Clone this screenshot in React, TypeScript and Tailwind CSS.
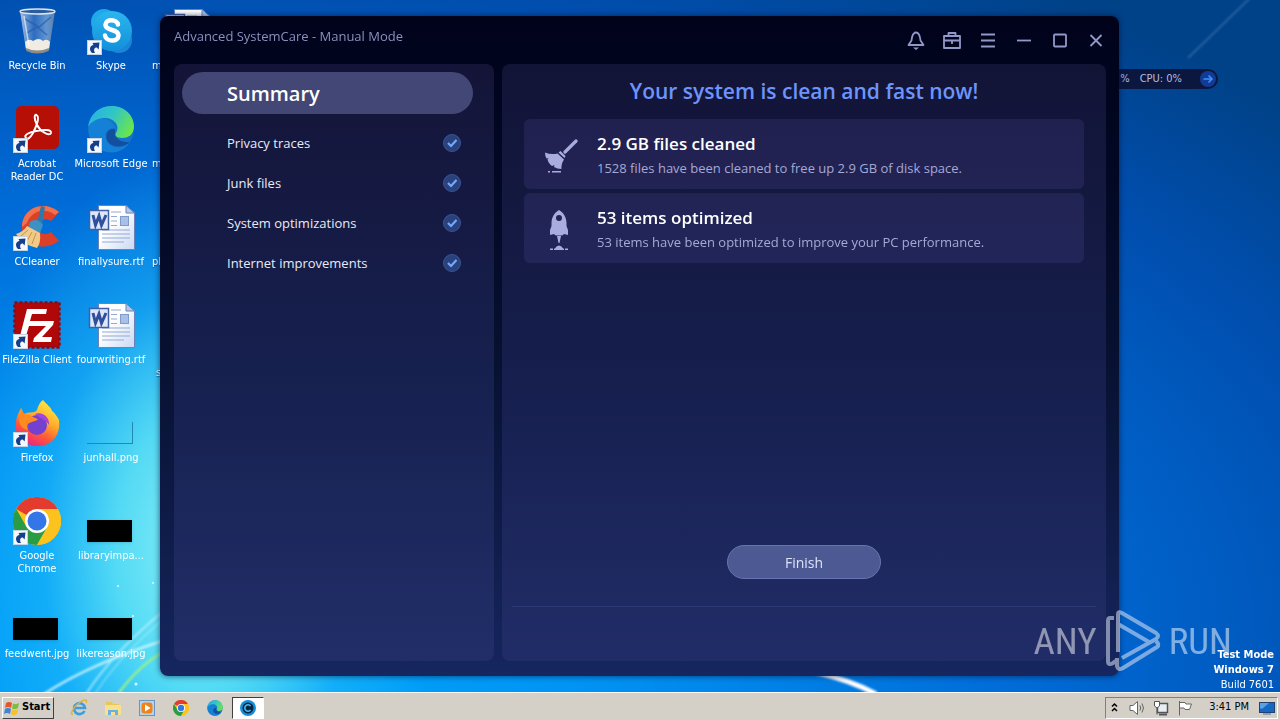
import type { ReactNode } from 'react'

interface DesktopItem {
  label: string
  icon: ReactNode
  shortcut?: boolean
}

const checks = ['Privacy traces', 'Junk files', 'System optimizations', 'Internet improvements']

function Shortcut() {
  return (
    <svg viewBox="0 0 15 15" className="absolute bottom-0 left-0 size-[15px]">
      <rect x="0.5" y="0.5" width="14" height="14" fill="#f4f8fc" stroke="#c3d3e2" />
      <path d="M5 13C1.500 9.500 3 5.500 6.500 5L5.500 3L12.500 2.500L11.600 9.500L9.800 7.500C7 7.500 6.400 10 8 13Z" fill="#153f8a" />
    </svg>
  )
}

function RecycleBin() {
  return (
    <svg viewBox="0 0 48 48" className="size-12">
      <defs>
        <linearGradient id="bin" x1="0" x2="1">
          <stop offset="0" stopColor="#b9cfe8" stopOpacity="0.9" />
          <stop offset="0.4" stopColor="#3f78c4" stopOpacity="0.7" />
          <stop offset="0.75" stopColor="#7aa5d8" stopOpacity="0.8" />
          <stop offset="1" stopColor="#5a7ea8" />
        </linearGradient>
      </defs>
      <path d="M7 4L13 43Q24 49 36 43L42 4Z" fill="url(#bin)" />
      <path d="M12 35Q16 31 20 34Q26 30 30 34Q34 31 37 35L36 42Q24 47 13 42Z" fill="#f0ece4" />
      <path d="M13 41Q24 46 36 41L35.6 44Q24 49 13.4 44Z" fill="#8d8a88" />
      <path d="M12 12L26 20L38 10M14 26L24 20L34 28" stroke="#2a5ba6" strokeWidth="1.5" fill="none" opacity="0.7" />
      <ellipse cx="24.500" cy="4.500" rx="17.500" ry="2.500" fill="#2d5c9c" stroke="#dde6ee" strokeWidth="1.4" />
      <path d="M11 9L16 39" stroke="#fff" strokeWidth="1.5" opacity="0.6" />
    </svg>
  )
}

function Skype() {
  return (
    <svg viewBox="0 0 48 48" className="size-12">
      <defs>
        <linearGradient id="skype" x1="0" y1="0" x2="0" y2="1">
          <stop offset="0" stopColor="#2bb6ee" />
          <stop offset="1" stopColor="#1290da" />
        </linearGradient>
      </defs>
      <circle cx="17" cy="15" r="13" fill="#1ea9e8" />
      <circle cx="32" cy="33" r="13" fill="#1b86d8" />
      <circle cx="25" cy="24" r="20" fill="url(#skype)" />
      <path
        d="M31 17.500C30 12 19 11.500 18.500 17.500C18.500 24.500 31.500 21.500 31.500 28.500C31.500 35.500 19 35 18 28.500"
        fill="none"
        stroke="#fff"
        strokeWidth="4.500"
        strokeLinecap="round"
      />
    </svg>
  )
}

function Acrobat() {
  return (
    <svg viewBox="0 0 48 48" className="size-12">
      <rect x="3" y="1" width="43" height="43" rx="5" fill="#b50f06" />
      <path
        d="M13 33C10 30 17 27 23 26C30 24.500 39 24 38 28C36.500 32 27 26 24 20C21 14 21 9 23.500 10C27 12 23 22 20 28C17 33 14.500 35 13 33Z"
        fill="none"
        stroke="#fff"
        strokeWidth="2"
      />
    </svg>
  )
}

function Edge({ id, size }: { id: string; size: string }) {
  return (
    <svg viewBox="0 0 48 48" className={size}>
      <defs>
        <linearGradient id={id} x1="0" y1="0.200" x2="1" y2="0.600">
          <stop offset="0" stopColor="#27b1e4" />
          <stop offset="0.500" stopColor="#32c6c4" />
          <stop offset="1" stopColor="#6be64a" />
        </linearGradient>
      </defs>
      <circle cx="24" cy="24" r="23" fill="#1673cc" />
      <path d="M2 20C7 10 24 11 28 23C18 22 16 32 22 39C28 45 38 43 43 37C36 48 24 49 16 46C5 42 0 31 2 20Z" fill="#1581d6" />
      <path d="M1 22C3 8 13 1 25 1C38 1 47 11 47 21C47 30 41 33 35 33C29 33 27 30 29 28C34 20 26 12 16 13C8 14 3 18 1 22Z" fill={`url(#${id})`} />
      <path d="M28 24C20 23 17 30 21 37C27 44 38 42 43 37C37 38 28 35 28 28Z" fill="#124f9f" />
    </svg>
  )
}

function CCleaner() {
  return (
    <svg viewBox="0 0 48 48" className="size-12">
      <path d="M46 9C30 -4 9 6 9 24C9 42 30 50 46 38L38 29C32 33 25 31 25 24C25 17 32 14 38 18Z" fill="#dd4029" />
      <path d="M46 9C30 -4 9 6 9 24L14 20C18 8 32 4 42 12Z" fill="#f2714c" />
      <path d="M28 3L24 20L29 22L32 4Z" fill="#2d78ac" />
      <path d="M17 19Q24 14 30 22L27 30L15 25Z" fill="#3e91c5" />
      <path d="M14 23L27 30Q28 40 24 45Q10 42 3 31Q10 29 14 23Z" fill="#f0ca86" />
      <path d="M15 27L8 33M19 29L14 38M23 30L19 41" stroke="#c99447" />
    </svg>
  )
}

function WordDoc() {
  return (
    <svg viewBox="0 0 48 48" className="size-12">
      <defs>
        <linearGradient id="doc" x1="0" y1="0" x2="1" y2="1">
          <stop offset="0.400" stopColor="#fff" />
          <stop offset="1" stopColor="#c9d8f4" />
        </linearGradient>
      </defs>
      <path d="M11.500 2.500H39L47.500 10V46.500H11.500Z" fill="url(#doc)" stroke="#6b82b8" />
      <path d="M39 2.500V10H47.500Z" fill="#b4c8e8" stroke="#6b82b8" />
      <path d="M24 9H34M24 13.500H30M24 18H30M24 22.500H30M15 27H43M15 31H43M15 35H43M15 39H37" stroke="#93a9d3" />
      <rect x="33.500" y="13.500" width="8" height="9" fill="#a8c0e8" stroke="#7f9acb" />
      <rect x="2.500" y="7.500" width="19" height="19" fill="#dde7f8" stroke="#3f5fa8" strokeWidth="1.500" />
      <path d="M6 12L8.500 22L12 13L14.500 22L19 12" fill="none" stroke="#31509c" strokeWidth="3" />
    </svg>
  )
}

function FileZilla() {
  return (
    <svg viewBox="0 0 48 48" className="size-12">
      <rect x="1.500" y="1.500" width="45" height="45" fill="#b00808" stroke="#8e0a10" strokeWidth="2.500" strokeDasharray="3 2" />
      <path d="M14 8H34L33 13H19L17 20H27L26 25H16L13 35H7Z" fill="#fff" />
      <path d="M25 20H41L40 24L29 36H39L38 41H20L21 37L33 25H24Z" fill="#fff" />
    </svg>
  )
}

function Firefox() {
  return (
    <svg viewBox="0 0 48 48" className="size-12">
      <defs>
        <linearGradient id="fox" x1="0.800" y1="0" x2="0.300" y2="1">
          <stop offset="0" stopColor="#fff04a" />
          <stop offset="0.400" stopColor="#ffb02a" />
          <stop offset="0.700" stopColor="#ff5a36" />
          <stop offset="1" stopColor="#e9208a" />
        </linearGradient>
      </defs>
      <path d="M30 1C34 6 38 8 39 12C41 13 44 17 46 21C48 37 38 47 25 47C11 47 1 37 3 24C3 18 6 13 8 9L11 15C15 12 21 15 24 11C25 7 27 3 30 1Z" fill="url(#fox)" />
      <circle cx="24" cy="26" r="10" fill="#7340cf" />
      <path d="M22 15C29 12 37 18 36 26C33 21 28 20 22 15Z" fill="#a544dc" />
      <path d="M8 9L11 16C16 14 19 18 25 20C23 23 18 22 15 25C14 26 14 29 15 31C10 30 7 27 6 22Z" fill="#ff8a20" />
    </svg>
  )
}

function Chrome({ size }: { size: string }) {
  return (
    <svg viewBox="0 0 48 48" className={size}>
      <circle cx="24" cy="24" r="24" fill="#fcc31e" />
      <path d="M24 24L3.200 12A24 24 0 0 1 44.800 12Z" fill="#e33b2e" />
      <path d="M3.200 12A24 24 0 0 0 24 48L34.400 30L13.600 30Z" fill="#2a9c46" />
      <path d="M24 12H44.800A24 24 0 0 1 24 48L34.400 30Z" fill="#fcc31e" />
      <circle cx="24" cy="24" r="12" fill="#fff" />
      <circle cx="24" cy="24" r="9.500" fill="#3476e8" />
    </svg>
  )
}

const blackThumb = <div className="mt-[23px] h-[22px] w-[45px] bg-black shadow-sm" />

const columns: DesktopItem[][] = [
  [
    { label: 'Recycle Bin', icon: <RecycleBin /> },
    { label: 'Acrobat Reader DC', icon: <Acrobat />, shortcut: true },
    { label: 'CCleaner', icon: <CCleaner />, shortcut: true },
    { label: 'FileZilla Client', icon: <FileZilla />, shortcut: true },
    { label: 'Firefox', icon: <Firefox />, shortcut: true },
    { label: 'Google Chrome', icon: <Chrome size="size-12" />, shortcut: true },
    { label: 'feedwent.jpg', icon: blackThumb },
  ],
  [
    { label: 'Skype', icon: <Skype />, shortcut: true },
    { label: 'Microsoft Edge', icon: <Edge id="edgeLarge" size="size-12" />, shortcut: true },
    { label: 'finallysure.rtf', icon: <WordDoc /> },
    { label: 'fourwriting.rtf', icon: <WordDoc /> },
    { label: 'junhall.png', icon: <div className="mt-[23px] h-[22px] w-[46px] border-r border-b border-[#2389b0]" /> },
    { label: 'libraryimpa...', icon: blackThumb },
    { label: 'likereason.jpg', icon: blackThumb },
  ],
]

// Labels of the column that is mostly covered by the window
const coveredLabels = ['m', 'm', 'pl', 's']

function Wallpaper() {
  return (
    <svg viewBox="0 0 1280 692" preserveAspectRatio="none" className="absolute inset-0 size-full">
      <defs>
        <filter id="soft">
          <feGaussianBlur stdDeviation="1" />
        </filter>
      </defs>
      <g fill="none" filter="url(#soft)">
        <path d="M44 694Q90 664 165 640" stroke="#d8f8ff" strokeWidth="2.500" opacity="0.800" />
        <path d="M86 694Q115 650 165 610" stroke="#c8f4ff" strokeWidth="2" opacity="0.700" />
        <path d="M95 694Q120 655 165 618" stroke="#c8f4ff" strokeWidth="1.500" opacity="0.500" />
        <path d="M118 694Q140 664 165 651" stroke="#9cf08a" strokeWidth="2.500" />
        <path d="M815 672Q850 680 876 694" stroke="#fff" strokeWidth="5" />
        <path d="M1188 58L1250 -2" stroke="#5c93c8" strokeWidth="2" opacity="0.400" />
      </g>
      <g fill="#e4fbff">
        <circle cx="118" cy="586" r="1" />
        <circle cx="153" cy="583" r="1" />
        <circle cx="136" cy="684" r="1.500" />
        <circle cx="133" cy="616" r="1" />
      </g>
    </svg>
  )
}

function DesktopIcon({ item }: { item: DesktopItem }) {
  return (
    <button className="flex h-[98px] flex-col items-center pt-[7px]">
      <span className="relative mb-1 flex size-12 shrink-0 items-start">
        {item.icon}
        {item.shortcut && <Shortcut />}
      </span>
      <span className={item.label.includes('Reader') || item.label.includes('Google') ? 'w-[60px]' : 'whitespace-nowrap'}>
        {item.label}
      </span>
    </button>
  )
}

function Broom() {
  return (
    <svg viewBox="0 0 34 34" className="size-[34px]" fill="#a9acdf">
      <path d="M32 2L21 13" stroke="#a9acdf" strokeWidth="3.200" strokeLinecap="round" />
      <path d="M16.500 12L21.500 17L20.500 19L14.500 13.500Z" />
      <path d="M13.500 14.500L20 20.500Q17 25 17.500 30Q13 30 10 28L10.500 26L8 27Q4 24 3.500 20L5 19L2.500 19.500Q1 17 1 13.500Q7 16 13.500 14.500Z" />
      <path d="M8 32H17V33.500H8ZM4 32H6V33.500H4Z" />
    </svg>
  )
}

function Rocket() {
  return (
    <svg viewBox="0 0 20 40" className="mr-1 h-10 w-5" fill="#a9acdf">
      <path fillRule="evenodd" d="M10 0C15 3 17.500 8 17.500 13V16L19 20V25L15 24Q14 25.500 12 25.500H8Q6 25.500 5 24L1 25V20L2.500 16V13C2.500 8 5 3 10 0ZM10 5A3 3 0 1 0 10 11A3 3 0 1 0 10 5Z" />
      <path d="M8 26H12L10.500 33H9.500ZM6 38.500Q7 36 10 35.500Q13 36 14 38.500ZM1 38.500H4V40H1ZM16 38.500H19V40H16ZM5 38.500H15V40H5Z" />
    </svg>
  )
}

const windowButtons: { name: string; drawing: ReactNode }[] = [
  {
    name: 'Notifications',
    drawing: (
      <>
        <path d="M1.500 14L4.500 9.500C5 4.500 6 1.500 9 1.500C12 1.500 13 4.500 13.500 9.500L16.500 14Z" />
        <path d="M6 16.500H12L9 19Z" fill="#9299c8" stroke="none" />
      </>
    ),
  },
  {
    name: 'Toolbox',
    drawing: <path d="M1 5H17V17H1ZM5.500 5V2H12.500V5M1 9.500H17M9 9V13" />,
  },
  { name: 'Menu', drawing: <path d="M2 3.500H16M2 9.500H16M2 15.500H16" /> },
  { name: 'Minimize', drawing: <path d="M2 9.500H16" /> },
  { name: 'Maximize', drawing: <rect x="3" y="3.500" width="12" height="12" rx="1" /> },
  { name: 'Close', drawing: <path d="M3.500 4L14.500 15M14.500 4L3.500 15" /> },
]

function ResultCard({ icon, title, text }: { icon: ReactNode; title: string; text: string }) {
  return (
    <li className="flex h-[70px] items-center rounded-md bg-[#7468c8]/15 pt-[3px]">
      <div className="flex w-[73px] justify-center">{icon}</div>
      <div>
        <h2 className="text-[17px] leading-6 font-semibold text-white">{title}</h2>
        <p className="text-[13px] leading-6 text-[#a5a9d6]">{text}</p>
      </div>
    </li>
  )
}

function SystemCareWindow() {
  return (
    <main className="absolute top-4 right-[161px] bottom-4 left-[160px] flex flex-col rounded-lg bg-linear-to-b from-[#00031a] via-[#07102f] to-[#16265f] pr-[13px] pb-[15px] pl-[14px] font-['Open_Sans','Noto_Sans',sans-serif] shadow-[0_0_6px_rgba(0,20,60,0.7)]">
      <header className="-mr-2 flex h-12 shrink-0 items-center justify-between">
        <span className="pb-1.5 text-[13px] text-[#8990bd]">Advanced SystemCare - Manual Mode</span>
        <div className="flex">
          {windowButtons.map((b) => (
            <button key={b.name} aria-label={b.name} className="flex h-9 w-9 items-center justify-center">
              <svg viewBox="0 0 18 19" width="18" height="19" fill="none" stroke="#9299c8" strokeWidth="1.800" strokeLinejoin="round">
                {b.drawing}
              </svg>
            </button>
          ))}
        </div>
      </header>

      <div className="flex min-h-0 flex-1 gap-2">
        <nav className="w-[320px] shrink-0 rounded-lg bg-linear-to-b from-[#141438] via-[#16204e] to-[#212e68] pt-2 pr-[21px] pl-2">
          <button className="mb-[9px] flex h-[42px] w-full items-center rounded-full bg-[#424775] pt-0.5 pl-[45px] text-[20px] font-semibold text-white">
            Summary
          </button>
          <ul>
            {checks.map((label) => (
              <li key={label} className="flex h-10 items-center justify-between pr-3 pl-[45px] text-[13px] text-[#e8eaf8]">
                <span className="pt-0.5">{label}</span>
                <svg viewBox="0 0 18 18" className="size-[18px]">
                  <circle cx="9" cy="9" r="8.500" fill="#29427e" stroke="#3b5390" />
                  <path d="M5 9L8 12L13.500 6" fill="none" stroke="#77a7fa" strokeWidth="2.200" />
                </svg>
              </li>
            ))}
          </ul>
        </nav>

        <section className="flex min-w-0 flex-1 flex-col rounded-lg bg-linear-to-b from-[#121436] via-[#151e4c] to-[#212d68] px-[10px] pt-[11px]">
          <h1 className="text-center text-[21px] leading-8 font-semibold text-[#6d94fa]">Your system is clean and fast now!</h1>
          <ul className="mx-3 mt-3 flex flex-col gap-1">
            <ResultCard icon={<Broom />} title="2.9 GB files cleaned" text="1528 files have been cleaned to free up 2.9 GB of disk space." />
            <ResultCard icon={<Rocket />} title="53 items optimized" text="53 items have been optimized to improve your PC performance." />
          </ul>
          <button className="mt-auto mb-[27px] h-[34px] w-[154px] shrink-0 self-center rounded-full border border-[#6673b0] bg-[#4c5993] text-[14px] text-[#dfe3fa]">
            Finish
          </button>
          <div className="h-[55px] shrink-0 border-t border-[#2d3a75]" />
        </section>
      </div>
    </main>
  )
}

function Watermark() {
  return (
    <div className="pointer-events-none absolute right-12 bottom-5 flex h-[62px] items-center gap-2 font-['Roboto_Condensed','Liberation_Sans_Narrow',sans-serif] text-[37px] leading-none font-normal text-white/50">
      <span>ANY</span>
      <svg viewBox="0 0 56 62" className="h-[62px] w-14 opacity-55" fill="none" stroke="#dfe6f5" strokeWidth="4">
        <path d="M9 8H5Q3 8 3 11V51Q3 56 8 53L11 51" />
        <path d="M13 42V4Q13 1 17 3L51 23Q55 26 51 29L17 48" />
        <path d="M13 14L44 32M12 48V56Q13 61 18 58L52 37Q55 35 51 31" />
      </svg>
      <span>RUN</span>
    </div>
  )
}

function Taskbar() {
  return (
    <footer className="flex h-7 shrink-0 items-center border-t border-white bg-[#d4d0c8] px-0.5 pt-0.5 text-[11px] text-black">
      <button className="flex h-[22px] w-[52px] items-center gap-0.5 border border-t-white border-r-[#404040] border-b-[#404040] border-l-white px-px font-bold">
        <svg viewBox="0 0 16 16" className="size-4 shrink-0">
          <path d="M2 3Q5 1 8 3L7 8Q4 6 1 8Z" fill="#e5562c" />
          <path d="M9 3.500Q12 5 15 3L14 8Q11 10 8 8.500Z" fill="#7fbb3c" />
          <path d="M1 9Q4 7 7 9L6 14Q3 12 0 14Z" fill="#3e83d6" />
          <path d="M8 9.500Q11 11 14 9L13 14Q10 16 7 14.500Z" fill="#f4c02e" />
        </svg>
        Start
      </button>

      <div className="ml-2 flex items-center">
        <button aria-label="Internet Explorer" className="flex w-[34px] justify-center">
          <svg viewBox="0 0 18 18" className="size-[18px]" fill="none">
            <path d="M14.500 12A5.500 5.500 0 1 1 15 9H5" stroke="#3a9ee0" strokeWidth="2.600" />
            <path d="M3 15C-1 17 3 8 9 4C14 0 18 0 16 4" stroke="#e0b43a" strokeWidth="1.500" />
          </svg>
        </button>
        <button aria-label="Windows Explorer" className="flex w-[34px] justify-center">
          <svg viewBox="0 0 18 18" className="size-[18px]">
            <path d="M2 3H8L9 5H15V8H2Z" fill="#e8c65c" />
            <path d="M1 6H17V16H1Z" fill="#f5e191" />
            <path d="M4 16V11H14V16H11V13H7V16Z" fill="#6cb0dc" />
          </svg>
        </button>
        <button aria-label="Media Player" className="flex w-[34px] justify-center">
          <svg viewBox="0 0 18 18" className="size-[18px]">
            <rect x="1.500" y="1.500" width="15" height="15" fill="#b9d2ee" stroke="#6794c6" />
            <rect x="3.500" y="3.500" width="11" height="11" rx="3" fill="#f08318" />
            <path d="M7 5.500L12.500 9L7 12.500Z" fill="#fff" />
          </svg>
        </button>
        <button aria-label="Chrome" className="flex w-[34px] justify-center">
          <Chrome size="size-4" />
        </button>
        <button aria-label="Edge" className="flex w-[34px] justify-center">
          <Edge id="edgeSmall" size="size-4" />
        </button>
        <button aria-label="Advanced SystemCare" className="flex h-[22px] w-8 items-center justify-center border border-t-[#404040] border-r-white border-b-white border-l-[#404040] bg-white">
          <svg viewBox="0 0 16 16" className="size-4">
            <circle cx="8" cy="8" r="8" fill="#1590d8" />
            <circle cx="8" cy="8" r="5.500" fill="#0a2440" />
            <path d="M10.500 6A3.200 3.200 0 1 0 10.500 10" fill="none" stroke="#4db8f0" strokeWidth="1.600" />
          </svg>
        </button>
      </div>

      <div className="ml-auto flex h-[22px] items-center border border-t-[#808080] border-r-white border-b-white border-l-[#808080] pr-0.5 pl-1">
        <svg viewBox="0 0 9 12" className="h-3 w-[9px]" fill="none" stroke="#000" strokeWidth="1.500">
          <path d="M2 4.500L4.500 2L7 4.500M2 9L4.500 6.500L7 9" />
        </svg>
        <svg viewBox="0 0 18 16" className="ml-2.5 h-4 w-[18px]" stroke="#666" fill="none">
          <path d="M1 5.500H4L8.500 1.500V14.500L4 10.500H1Z" fill="#fff" />
          <path d="M11 5.500Q12.500 8 11 10.500M13 3.500Q16 8 13 12.500" />
        </svg>
        <svg viewBox="0 0 16 16" className="ml-1.5 size-4" stroke="#555">
          <rect x="4.500" y="3.500" width="10" height="9" fill="#e8eef4" strokeWidth="1.500" />
          <path d="M6 14.500H14" strokeWidth="2" />
          <path d="M1.500 1.500H6.500V6L4 8L1.500 6ZM4 8V14.500" fill="#fff" />
        </svg>
        <svg viewBox="0 0 16 16" className="ml-2 size-4" fill="#fff" stroke="#666">
          <path d="M2.500 1V15.500M2.500 2.500H8L9 4H14.500L12.500 9.500H8L7 8H2.500Z" />
        </svg>
        <time className="mr-2.5 ml-4">3:41 PM</time>
        <svg viewBox="0 0 16 14" className="h-3.5 w-4">
          <rect x="0.500" y="1.500" width="15" height="10" fill="#1767c4" stroke="#20426c" />
          <path d="M1 2H10L3 8L1 7Z" fill="#5aa0e4" />
          <path d="M4 13H12" stroke="#8ea0b4" strokeWidth="2" />
        </svg>
      </div>
    </footer>
  )
}

export default function App() {
  return (
    <div className="flex h-screen min-h-[700px] flex-col overflow-hidden font-['DejaVu_Sans_Condensed','Noto_Sans',sans-serif]">
      <div className="relative flex-1 bg-[radial-gradient(ellipse_240px_400px_at_200px_550px,#8af0f8_0%,#5ce0f4e8_35%,#24bcf880_65%,#00a0f800_100%),radial-gradient(ellipse_1350px_750px_at_200px_650px,#00a8fc_0%,#0094f4_28%,#006cd8_60%,#004eae_90%,#004288_108%)]">
        <Wallpaper />

        <div className="relative flex text-[11px] leading-[13px] text-white [text-shadow:0_1px_1px_rgba(0,40,100,0.6)]">
          {columns.map((items, i) => (
            <div key={i} className="flex w-[74px] flex-col">
              {items.map((item) => (
                <DesktopIcon key={item.label} item={item} />
              ))}
            </div>
          ))}
          <div className="flex flex-col pl-1">
            {coveredLabels.map((label, i) => (
              <div key={i} className="flex h-[98px] flex-col pt-[7px]">
                <div className="mb-1 h-12 pl-[11px]">{i === 0 && <WordDoc />}</div>
                <span className={label === 's' ? 'pt-[13px] pl-1' : ''}>{label}</span>
              </div>
            ))}
          </div>
        </div>

        <div className="absolute top-[69px] right-[62px] flex h-5 w-[180px] items-center justify-end gap-2.5 rounded-full bg-[#0c1740] pr-0.5 text-[11px] text-[#b5bedc]">
          <span>%</span>
          <span className="mr-2">CPU: 0%</span>
          <svg viewBox="0 0 16 16" className="size-4">
            <circle cx="8" cy="8" r="8" fill="#123c94" />
            <path d="M3.500 8H12M8.500 4.500L12 8L8.500 11.500" fill="none" stroke="#4090ff" strokeWidth="1.600" />
          </svg>
        </div>

        <SystemCareWindow />

        <Watermark />
        <p className="absolute right-1.5 bottom-0 text-right text-[11px] leading-[15px] text-white">
          <strong>
            Test Mode
            <br />
            Windows 7
          </strong>
          <br />
          Build 7601
        </p>
      </div>
      <Taskbar />
    </div>
  )
}
